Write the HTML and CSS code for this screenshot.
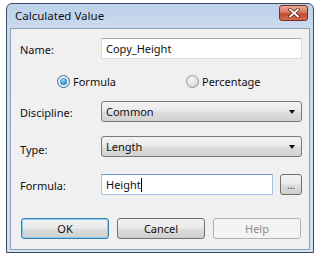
FILE: index.html
```html
<!DOCTYPE html>
<html lang="en">
<head>
    <meta charset="UTF-8">
    <title>Calculated Value</title>
    <link rel="stylesheet" href="styles.css">
</head>
<body>
    <div class="window">
        <div class="titlebar">
            <span class="title">Calculated Value</span>
            <span class="close-btn">
                <svg width="12" height="10" viewBox="0 0 12 10">
                    <path d="M2 1.5 L10 8.5 M10 1.5 L2 8.5" stroke="#5a2418" stroke-width="3.2" stroke-linecap="square"/>
                    <path d="M2 1.5 L10 8.5 M10 1.5 L2 8.5" stroke="#fff" stroke-width="1.8" stroke-linecap="square"/>
                </svg>
            </span>
        </div>
        <div class="client">
            <div class="row row-name">
                <span class="label">Name:</span>
                <div class="textbox">Copy_Height</div>
            </div>

            <div class="radio-row">
                <span class="radio-item"><span class="radio checked"><span class="dot"></span></span>Formula</span>
                <span class="radio-item"><span class="radio"></span>Percentage</span>
            </div>

            <div class="row row-discipline">
                <span class="label">Discipline:</span>
                <div class="combo">Common<span class="arrow"></span></div>
            </div>

            <div class="row row-type">
                <span class="label label-low">Type:</span>
                <div class="combo">Length<span class="arrow"></span></div>
            </div>

            <div class="row row-formula">
                <span class="label">Formula:</span>
                <div class="textbox focused">Height<span class="caret"></span></div>
                <span class="btn small-btn">...</span>
            </div>

            <div class="buttons">
                <span class="btn default-btn">OK</span>
                <span class="btn">Cancel</span>
                <span class="btn disabled">Help</span>
            </div>
        </div>
    </div>
</body>
</html>
```

FILE: styles.css
```css
body {
    margin: 0;
    background: #fff;
    font-family: "Noto Sans", "Open Sans", sans-serif;
    font-size: 11px;
    color: #111;
}
.window {
    margin: 3px 0 0 6px;
    width: 308px;
    height: 250px;
    box-sizing: border-box;
    border: 1px solid #3b4b5e;
    border-radius: 6px 6px 0 0;
    background: linear-gradient(#bdd1ea, #c9daef 24px, #d3e1f2);
    padding: 0 3px 2px 3px;
    display: flex;
    flex-direction: column;
}
.titlebar {
    height: 24px;
    display: flex;
    align-items: center;
    justify-content: space-between;
    padding-left: 5px;
    flex-shrink: 0;
}
.title {
    font-size: 11.5px;
    color: #111;
    margin-top: -1px;
}
.close-btn {
    width: 27px;
    height: 14px;
    margin-right: 2px;
    margin-top: -7px;
    border: 1px solid #7a2c1e;
    border-radius: 3px;
    background: linear-gradient(#e9a898, #d87a63 45%, #c54a31 55%, #d46a4c);
    display: flex;
    align-items: center;
    justify-content: center;
}
.client {
    flex: 1;
    border: 1px solid #8ea2ba;
    background: #f0f0f0;
    padding: 9px 7px 0 9px;
}
.row {
    display: grid;
    grid-template-columns: 81px 1fr;
    align-items: center;
    height: 21px;
}
.row-discipline { margin-top: 13px; }
.row-type { margin-top: 14px; }
.row-formula {
    margin-top: 17px;
    grid-template-columns: 81px 1fr 29px;
}
.row-formula .small-btn {
    margin-left: 7px;
    width: 22px;
}
.label {
    padding-top: 1px;
}
.label-low {
    padding-top: 5px;
}
.textbox {
    height: 21px;
    box-sizing: border-box;
    border: 1px solid #d7dde5;
    border-top-color: #abadb3;
    background: #fff;
    padding: 1px 0 0 4px;
    line-height: 17px;
}
.textbox.focused {
    border-color: #a3c6e8;
    border-top-color: #6f9fd3;
}
.caret {
    display: inline-block;
    width: 1px;
    height: 14px;
    background: #000;
    vertical-align: -3px;
}
.radio-row {
    margin-top: 16px;
    height: 13px;
    display: grid;
    grid-template-columns: 129px auto;
    padding-left: 37px;
    align-items: center;
}
.radio-item {
    display: flex;
    align-items: center;
    gap: 3px;
    line-height: 13px;
}
.radio {
    width: 13px;
    height: 13px;
    box-sizing: border-box;
    border-radius: 50%;
    border: 1px solid #959595;
    background: radial-gradient(circle at 40% 35%, #fafafa, #dadada 70%, #cdcdcd);
    display: flex;
    align-items: center;
    justify-content: center;
}
.radio.checked {
    border-color: #3c6e96;
    background: radial-gradient(circle, #f4f4f4, #dfe6ec);
}
.dot {
    width: 7px;
    height: 7px;
    border-radius: 50%;
    background: radial-gradient(circle at 40% 35%, #9fd8f5, #2f8fd0 60%, #1b5a8c);
}
.combo {
    position: relative;
    height: 21px;
    box-sizing: border-box;
    border: 1px solid #7a7a7a;
    border-radius: 3px;
    background: linear-gradient(#f3f3f3, #ebebeb 45%, #dddddd 55%, #d2d2d2);
    padding: 1px 0 0 4px;
    line-height: 17px;
}
.arrow {
    position: absolute;
    right: 6px;
    top: 8px;
    width: 0;
    height: 0;
    border-left: 3.5px solid transparent;
    border-right: 3.5px solid transparent;
    border-top: 4px solid #111;
}
.btn {
    height: 21px;
    box-sizing: border-box;
    border: 1px solid #707070;
    border-radius: 3px;
    background: linear-gradient(#f2f2f2, #ebebeb 45%, #dddddd 55%, #cfcfcf);
    display: flex;
    align-items: center;
    justify-content: center;
    color: #111;
}
.small-btn {
    font-size: 10px;
    line-height: 1;
    padding-top: 1px;
    color: #333;
}
.buttons {
    margin-top: 23px;
    margin-left: 1px;
    display: grid;
    grid-template-columns: 88px 88px 88px;
    column-gap: 8px;
}
.default-btn {
    border-color: #3c7fb1;
    box-shadow: inset 0 0 0 1px #82cef0;
}
.btn.disabled {
    border-color: #adb2b5;
    background: #f4f4f4;
    color: #8d8d8d;
}
```
